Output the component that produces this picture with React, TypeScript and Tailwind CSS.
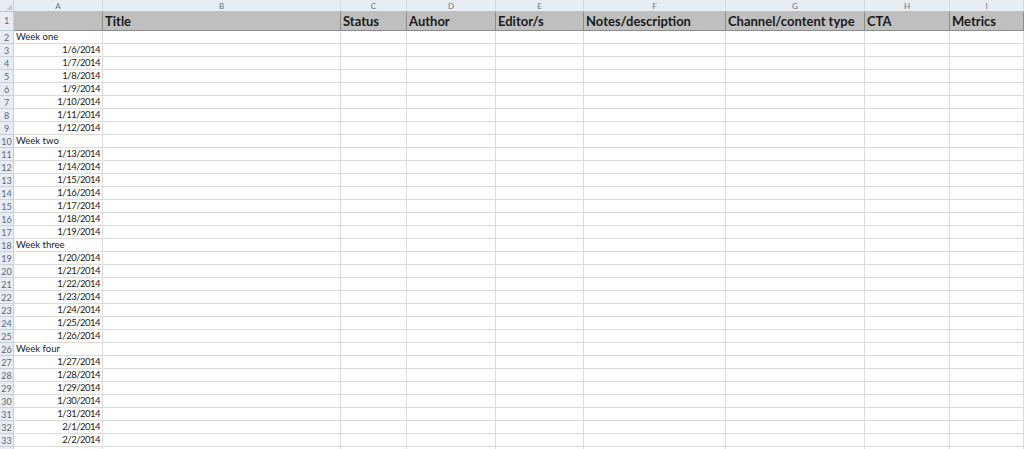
import React from 'react';

const cols = ['A', 'B', 'C', 'D', 'E', 'F', 'G', 'H', 'I'];
const headings = ['', 'Title', 'Status', 'Author', 'Editor/s', 'Notes/description', 'Channel/content type', 'CTA', 'Metrics'];

const gridCols = 'grid grid-cols-[14px_89px_238px_66px_89px_88px_142px_139px_85px_1fr]';

const buildRows = () => {
  const rows: { n: number | null; text: string; date: boolean }[] = [];
  const weeks = ['Week one', 'Week two', 'Week three', 'Week four'];
  let n = 2;
  let day = 6;
  weeks.forEach((w) => {
    rows.push({ n: n++, text: w, date: false });
    for (let k = 0; k < 7; k++) {
      const d = day > 31 ? `2/${day - 31}/2014` : `1/${day}/2014`;
      rows.push({ n: n++, text: d, date: true });
      day++;
    }
  });
  // partially visible row at the bottom edge
  rows.push({ n: null, text: '', date: false });
  return rows;
};

const App: React.FC = () => {
  const rows = buildRows();
  return (
    <div className="w-[1024px] h-[449px] overflow-hidden bg-white font-['Lato','Liberation_Sans',sans-serif] text-[#222]">
      {/* column letters */}
      <div className={`${gridCols} h-[12px] bg-[#e8edf4] border-b border-[#b9c2cd]`}>
        <div className="relative border-r border-[#c9d0da]">
          <svg className="absolute right-[1px] bottom-[1px]" width="6" height="6" viewBox="0 0 6 6">
            <path d="M6 0 L6 6 L0 6 Z" fill="#c3cad3" />
          </svg>
        </div>
        {cols.map((c) => (
          <div key={c} className="flex items-center justify-center border-r border-[#d3d9e1] text-[8px] leading-none text-[#6c7480]">
            {c}
          </div>
        ))}
      </div>

      {/* heading row */}
      <div className={`${gridCols} h-[19px]`}>
        <div className="flex items-center justify-center bg-[#e8edf4] border-r border-b border-[#c9d0da] text-[9px] text-[#5d6877]">1</div>
        {headings.map((h, i) => (
          <div key={i} className="flex items-end pl-[2px] pb-[1px] bg-[#bfbfbf] border-r border-b border-[#8c8c8c] text-[13px] font-bold leading-[16px] text-[#1a1a1a] whitespace-nowrap overflow-hidden">
            {h}
          </div>
        ))}
      </div>

      {rows.map((r, idx) => (
        <div key={idx} className={`${gridCols} h-[13px]`}>
          <div className="flex items-center justify-center bg-[#e8edf4] border-r border-b border-[#c9d0da] text-[9px] leading-none text-[#5d6877]">
            {r.n}
          </div>
          <div className={`flex items-center border-r border-b border-[#dcdcdc] text-[9.5px] leading-none whitespace-nowrap ${r.date ? 'justify-end pr-[2px] tracking-[-0.5px]' : 'pl-[2px]'}`}>
            {r.text}
          </div>
          {cols.slice(1).map((c) => (
            <div key={c} className="border-r border-b border-[#dcdcdc]" />
          ))}
        </div>
      ))}
    </div>
  );
};

export default App;
